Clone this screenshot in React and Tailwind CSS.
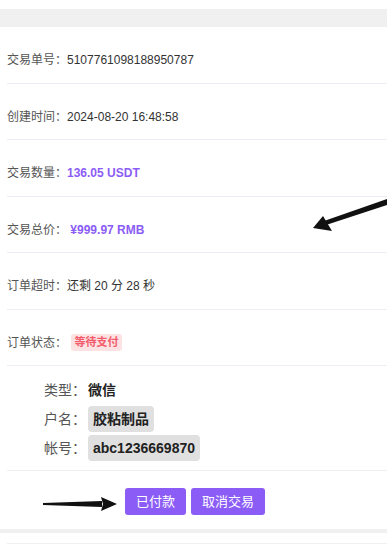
import React from "react";

const rows = [
  { label: "交易单号：", value: "5107761098188950787" },
  { label: "创建时间：", value: "2024-08-20 16:48:58" },
  { label: "交易数量：", value: "136.05 USDT", accent: true },
  { label: "交易总价：", value: "\u00a0¥999.97 RMB", accent: true },
  { label: "订单超时：", value: "还剩 20 分 28 秒" },
];

const font = { fontFamily: '"Liberation Sans", "Noto Sans CJK SC", sans-serif' };

const Row = ({ children }) => (
  <div className="ml-[7px] h-[56.5px] pt-[23px] border-b border-[#ebeef5] text-[12px] leading-[20px] flex items-start">
    {children}
  </div>
);

export default function App() {
  return (
    <div className="relative w-[387px] h-[544px] bg-white overflow-hidden" style={font}>
      <div className="h-[9px]" />
      <div className="h-[18px] bg-[#f0f0f0]" />

      {rows.map((r) => (
        <Row key={r.label}>
          <span className="text-[#555]">{r.label}</span>
          <span
            className={
              r.accent ? "font-bold text-[#8b5cf6]" : "text-[#333]"
            }
          >
            {r.value}
          </span>
        </Row>
      ))}

      <Row>
        <span className="text-[#555]">订单状态：</span>
        <span className="ml-[4px] mt-[1px] h-[17px] px-[3.5px] rounded-[3px] bg-[#fde2e4] text-[#f25c6b] text-[11px] leading-[17px] font-bold">
          等待支付
        </span>
      </Row>

      <div className="ml-[7px] pl-[37px] pt-[11px] pb-[9px] border-b border-[#eeeef3] flex flex-col gap-[3px] text-[14px]">
        <div className="flex items-center h-[26px]">
          <span className="w-[44px] text-[#555]">类型：</span>
          <span className="font-bold text-[#222]">微信</span>
        </div>
        <div className="flex items-center h-[26px]">
          <span className="w-[44px] text-[#555]">户名：</span>
          <span className="h-[26px] leading-[26px] px-[5px] rounded-[4px] bg-[#e0e0e0] font-bold text-[#222]">
            胶粘制品
          </span>
        </div>
        <div className="flex items-center h-[26px]">
          <span className="w-[44px] text-[#555]">帐号：</span>
          <span className="h-[26px] leading-[26px] px-[5px] rounded-[4px] bg-[#e0e0e0] font-bold text-[#222]">
            abc1236669870
          </span>
        </div>
      </div>

      <div className="flex pl-[125px] pt-[17px] gap-[5px] h-[58px]">
        <button className="h-[27px] px-[11px] rounded-[3px] bg-[#8b5cf6] text-white text-[13px]">
          已付款
        </button>
        <button className="h-[27px] px-[11px] rounded-[3px] bg-[#8b5cf6] text-white text-[13px]">
          取消交易
        </button>
      </div>

      <div className="h-[4px] bg-[#f0f0f0]" />
      <div className="h-[10px]" />
      <div className="ml-[7px] border-t border-[#f0f0f0]" />

      <svg className="absolute left-0 top-0 pointer-events-none" width="387" height="544">
        <polygon points="387,199 387,205 326,225 324,221" fill="#111" />
        <polygon points="313,228 323,216 332,231" fill="#111" />
        <polygon points="43,503 102,501 102,507 43,505" fill="#111" />
        <polygon points="117,504 101,497 103,504 101,511" fill="#111" />
      </svg>
    </div>
  );
}
